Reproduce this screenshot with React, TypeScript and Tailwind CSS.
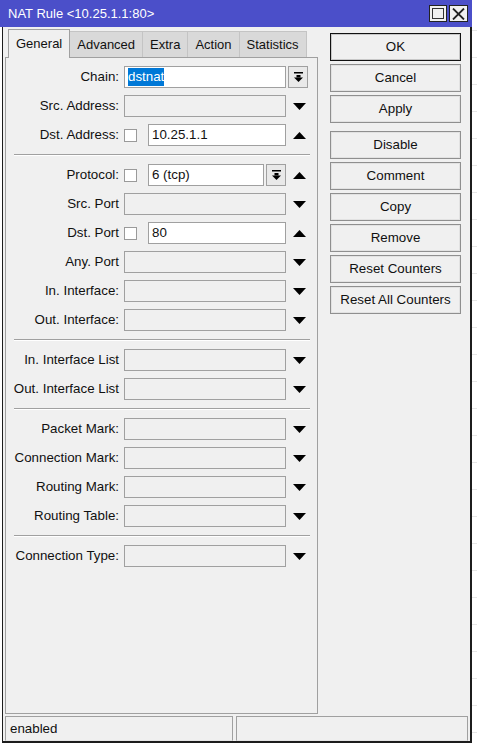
import React from "react"

type Row =
  | { sep: true }
  | { sep?: false; label: string; kind: "chain" | "empty" | "check" | "protocol"; value?: string; arrow?: "up" | "down" }

const rows: Row[] = [
  { label: "Chain:", kind: "chain", value: "dstnat" },
  { label: "Src. Address:", kind: "empty", arrow: "down" },
  { label: "Dst. Address:", kind: "check", value: "10.25.1.1", arrow: "up" },
  { sep: true },
  { label: "Protocol:", kind: "protocol", value: "6 (tcp)", arrow: "up" },
  { label: "Src. Port", kind: "empty", arrow: "down" },
  { label: "Dst. Port", kind: "check", value: "80", arrow: "up" },
  { label: "Any. Port", kind: "empty", arrow: "down" },
  { label: "In. Interface:", kind: "empty", arrow: "down" },
  { label: "Out. Interface:", kind: "empty", arrow: "down" },
  { sep: true },
  { label: "In. Interface List", kind: "empty", arrow: "down" },
  { label: "Out. Interface List", kind: "empty", arrow: "down" },
  { sep: true },
  { label: "Packet Mark:", kind: "empty", arrow: "down" },
  { label: "Connection Mark:", kind: "empty", arrow: "down" },
  { label: "Routing Mark:", kind: "empty", arrow: "down" },
  { label: "Routing Table:", kind: "empty", arrow: "down" },
  { sep: true },
  { label: "Connection Type:", kind: "empty", arrow: "down" },
]

const tabs = ["General", "Advanced", "Extra", "Action", "Statistics"]

function Arrow({ dir }: { dir: "up" | "down" }) {
  return (
    <svg width="13" height="7" viewBox="0 0 13 7" className="ml-[7px] shrink-0">
      {dir === "down" ? <polygon points="0,0 13,0 6.5,7" fill="#000" /> : <polygon points="0,7 13,7 6.5,0" fill="#000" />}
    </svg>
  )
}

function DropButton() {
  return (
    <div className="ml-[2px] w-[20px] h-[22px] shrink-0 border border-[#a0a0a0] bg-[#e9e9e9] flex items-center justify-center">
      <svg width="9" height="10" viewBox="0 0 9 10">
        <rect x="0" y="0" width="9" height="1.5" fill="#000" />
        <rect x="2.5" y="3" width="4" height="2.5" fill="#000" />
        <polygon points="0,5.5 9,5.5 4.5,10" fill="#000" />
      </svg>
    </div>
  )
}

function Checkbox() {
  return <div className="w-[13px] h-[13px] shrink-0 bg-white border border-[#9a9a9a]" />
}

function FieldRow({ row }: { row: Extract<Row, { label: string }> }) {
  return (
    <div className="flex items-center h-[22px]">
      <div className="w-[113px] shrink-0 text-right whitespace-nowrap">{row.label}</div>
      <div className="ml-[5px] flex items-center">
        {row.kind === "chain" && (
          <>
            <div className="w-[162px] h-[22px] bg-white border border-[#a0a0a0] pl-[3px] flex items-center">
              <span className="bg-[#0078d7] text-white leading-[18px]">{row.value}</span>
            </div>
            <DropButton />
          </>
        )}
        {row.kind === "empty" && <div className="w-[162px] h-[22px] border border-[#a0a0a0] bg-[#f0f0f0]" />}
        {row.kind === "check" && (
          <>
            <Checkbox />
            <div className="ml-[11px] w-[138px] h-[22px] bg-white border border-[#a0a0a0] pl-[3px] flex items-center">{row.value}</div>
          </>
        )}
        {row.kind === "protocol" && (
          <>
            <Checkbox />
            <div className="ml-[11px] w-[116px] h-[22px] bg-white border border-[#a0a0a0] pl-[3px] flex items-center">{row.value}</div>
            <DropButton />
          </>
        )}
        {row.arrow && <Arrow dir={row.arrow} />}
      </div>
    </div>
  )
}

const buttons = [
  ["OK", "Cancel", "Apply"],
  ["Disable", "Comment", "Copy", "Remove", "Reset Counters", "Reset All Counters"],
]

export default function App() {
  return (
    <div className="w-[477px] h-[746px] bg-white flex overflow-hidden text-[13.33px] text-[#111] font-['Liberation_Sans',Arial,sans-serif]">
      <div className="w-[472px] shrink-0 flex flex-col">
        {/* title bar */}
        <div className="h-[27px] bg-[#4b4fc9] flex items-center pl-[8px] pr-[4px]">
          <span className="text-white flex-1 text-[13px]">NAT Rule &lt;10.25.1.1:80&gt;</span>
          <div className="flex gap-[2px]">
            <div className="w-[18px] h-[17px] bg-[#f0f0f0] border border-[#222] flex items-center justify-center">
              <div className="w-[12px] h-[11px] border border-[#333]" />
            </div>
            <div className="w-[19px] h-[17px] bg-[#f0f0f0] border border-[#222] flex items-center justify-center">
              <svg width="13" height="12" viewBox="0 0 13 12">
                <path d="M1 0.5 L12 11.5 M12 0.5 L1 11.5" stroke="#222" strokeWidth="1.8" />
              </svg>
            </div>
          </div>
        </div>

        {/* window body */}
        <div className="h-[716px] ml-[2px] border-l border-r-2 border-b-2 border-[#1c1c1c] bg-[#f0f0f0] flex flex-col">
          <div className="flex h-[687px]">
            <div className="ml-[2px] w-[313px] flex flex-col">
              {/* tabs */}
              <div className="h-[30px] flex items-end pl-[3px] text-[13px]">
                {tabs.map((t, i) =>
                  i === 0 ? (
                    <div key={t} className="relative z-10 -mb-px h-[29px] px-[7px] bg-[#f0f0f0] border border-b-0 border-[#a0a0a0] flex items-center">
                      {t}
                    </div>
                  ) : (
                    <div key={t} className="h-[26px] px-[7px] bg-[#d9d9d9] border border-b-0 border-l-0 border-[#c4c4c4] flex items-center">
                      {t}
                    </div>
                  )
                )}
              </div>
              {/* panel */}
              <div className="h-[657px] border border-[#a0a0a0] pt-[8px] flex flex-col gap-[7px]">
                {rows.map((r, i) =>
                  r.sep ? (
                    <div key={i} className="h-[4px] flex items-center pl-[8px] pr-[7px]">
                      <div className="w-full h-[2px] border-t border-[#a0a0a0] border-b border-b-white" />
                    </div>
                  ) : (
                    <FieldRow key={i} row={r} />
                  )
                )}
              </div>
            </div>

            {/* buttons */}
            <div className="ml-[12px] pt-[6px] w-[131px] flex flex-col gap-[8px]">
              {buttons.map((group, gi) => (
                <div key={gi} className="flex flex-col gap-[3px]">
                  {group.map((b) => (
                    <div
                      key={b}
                      className={
                        b === "OK"
                          ? "h-[28px] border border-[#111] shadow-[inset_0_0_0_1px_#c8c8c8] bg-[#f0f0f0] flex items-center justify-center"
                          : "h-[28px] border border-[#8f8f8f] shadow-[inset_0_0_0_1px_#e2e2e2] bg-[#f0f0f0] flex items-center justify-center"
                      }
                    >
                      {b}
                    </div>
                  ))}
                </div>
              ))}
            </div>
          </div>

          {/* status bar */}
          <div className="mt-[2px] ml-[2px] h-[25px] flex gap-[3px]">
            <div className="w-[228px] border border-[#a0a0a0] border-b-[#e4e4e4] pl-[4px] flex items-center">enabled</div>
            <div className="w-[232px] border border-[#a0a0a0] border-b-[#e4e4e4]" />
          </div>
        </div>
      </div>

      {/* background table visible to the right */}
      <div className="flex-1 flex flex-col pt-[4px]">
        {Array.from({ length: 27 }).map((_, i) => (
          <div key={i} className="h-[27px] shrink-0 border-b border-[#e6e6e6]" />
        ))}
      </div>
    </div>
  )
}
